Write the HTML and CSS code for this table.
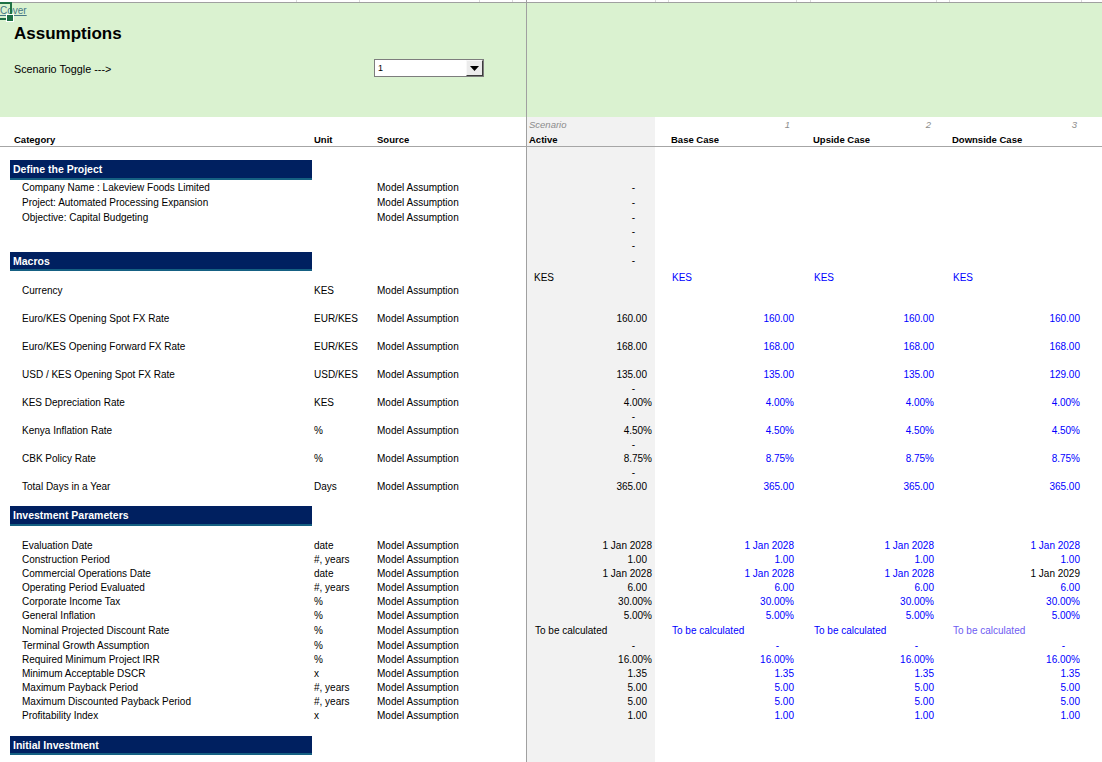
FILE: index.html
```html
<!DOCTYPE html>
<html lang="en">
<head>
<meta charset="utf-8">
<title>Assumptions</title>
<link rel="stylesheet" href="styles.css">
</head>
<body>
<div class="strip">
  <span class="w297"></span><span class="w63"></span><span class="w120"></span><span class="w33"></span><span class="w14 dark"></span><span class="w129"></span><span class="w13"></span><span class="w128"></span><span class="w14"></span><span class="w126"></span><span class="w13"></span><span class="w132"></span>
</div>
<div class="green">
  <a class="cover" href="#">Cover</a>
  <div class="sel"></div>
  <h1 class="title">Assumptions</h1>
  <div class="toggle">
    <span class="toggle-label">Scenario Toggle ---&gt;</span>
    <div class="dropdown">
      <span class="dd-val">1</span>
      <span class="dd-btn"><svg width="9" height="5" viewBox="0 0 9 5"><path d="M0 0H9L4.5 5Z" fill="#000"/></svg></span>
    </div>
  </div>
</div>
<div class="sheet">
  <div class="row h15 scen"><div class="act">Scenario</div><div class="base n6">1</div><div class="up n5">2</div><div class="down n4">3</div></div>
  <div class="row h15 head"><div class="cat">Category</div><div class="unit">Unit</div><div class="src">Source</div><div class="act">Active</div><div class="base">Base Case</div><div class="up">Upside Case</div><div class="down">Downside Case</div></div>
  <div class="row h13"></div>

  <div class="row h19 sec"><div class="bar">Define the Project</div></div>
  <div class="row h15"><div class="cat">Company Name : Lakeview Foods Limited</div><div class="src">Model Assumption</div><div class="act D">-</div></div>
  <div class="row h15"><div class="cat">Project: Automated Processing Expansion</div><div class="src">Model Assumption</div><div class="act D">-</div></div>
  <div class="row h15"><div class="cat">Objective: Capital Budgeting</div><div class="src">Model Assumption</div><div class="act D">-</div></div>
  <div class="row h14"><div class="act D">-</div></div>
  <div class="row h14"><div class="act D">-</div></div>

  <div class="row h18 sec"><div class="bar">Macros</div><div class="act D top">-</div></div>
  <div class="row h13"><div class="act L">KES</div><div class="base L b">KES</div><div class="up L b">KES</div><div class="down L b">KES</div></div>
  <div class="row h14"><div class="cat">Currency</div><div class="unit">KES</div><div class="src">Model Assumption</div></div>
  <div class="row h14"></div>
  <div class="row h14"><div class="cat">Euro/KES Opening Spot FX Rate</div><div class="unit">EUR/KES</div><div class="src">Model Assumption</div><div class="act N">160.00</div><div class="base N b">160.00</div><div class="up N b">160.00</div><div class="down N b">160.00</div></div>
  <div class="row h14"></div>
  <div class="row h14"><div class="cat">Euro/KES Opening Forward FX Rate</div><div class="unit">EUR/KES</div><div class="src">Model Assumption</div><div class="act N">168.00</div><div class="base N b">168.00</div><div class="up N b">168.00</div><div class="down N b">168.00</div></div>
  <div class="row h14"></div>
  <div class="row h14"><div class="cat">USD / KES Opening Spot FX Rate</div><div class="unit">USD/KES</div><div class="src">Model Assumption</div><div class="act N">135.00</div><div class="base N b">135.00</div><div class="up N b">135.00</div><div class="down N b">129.00</div></div>
  <div class="row h14"><div class="act D">-</div></div>
  <div class="row h14"><div class="cat">KES Depreciation Rate</div><div class="unit">KES</div><div class="src">Model Assumption</div><div class="act P">4.00%</div><div class="base P b">4.00%</div><div class="up P b">4.00%</div><div class="down P b">4.00%</div></div>
  <div class="row h14"><div class="act D">-</div></div>
  <div class="row h14"><div class="cat">Kenya Inflation Rate</div><div class="unit">%</div><div class="src">Model Assumption</div><div class="act P">4.50%</div><div class="base P b">4.50%</div><div class="up P b">4.50%</div><div class="down P b">4.50%</div></div>
  <div class="row h14"><div class="act D">-</div></div>
  <div class="row h14"><div class="cat">CBK Policy Rate</div><div class="unit">%</div><div class="src">Model Assumption</div><div class="act P">8.75%</div><div class="base P b">8.75%</div><div class="up P b">8.75%</div><div class="down P b">8.75%</div></div>
  <div class="row h14"><div class="act D">-</div></div>
  <div class="row h14"><div class="cat">Total Days in a Year</div><div class="unit">Days</div><div class="src">Model Assumption</div><div class="act N">365.00</div><div class="base N b">365.00</div><div class="up N b">365.00</div><div class="down N b">365.00</div></div>
  <div class="row h13"></div>

  <div class="row h19 sec"><div class="bar">Investment Parameters</div></div>
  <div class="row h13"></div>
  <div class="row h14"><div class="cat">Evaluation Date</div><div class="unit">date</div><div class="src">Model Assumption</div><div class="act P">1 Jan 2028</div><div class="base N b">1 Jan 2028</div><div class="up N b">1 Jan 2028</div><div class="down N b">1 Jan 2028</div></div>
  <div class="row h14"><div class="cat">Construction Period</div><div class="unit">#, years</div><div class="src">Model Assumption</div><div class="act N">1.00</div><div class="base N b">1.00</div><div class="up N b">1.00</div><div class="down N b">1.00</div></div>
  <div class="row h14"><div class="cat">Commercial Operations Date</div><div class="unit">date</div><div class="src">Model Assumption</div><div class="act P">1 Jan 2028</div><div class="base N b">1 Jan 2028</div><div class="up N b">1 Jan 2028</div><div class="down N">1 Jan 2029</div></div>
  <div class="row h14"><div class="cat">Operating Period Evaluated</div><div class="unit">#, years</div><div class="src">Model Assumption</div><div class="act N">6.00</div><div class="base N b">6.00</div><div class="up N b">6.00</div><div class="down N b">6.00</div></div>
  <div class="row h14"><div class="cat">Corporate Income Tax</div><div class="unit">%</div><div class="src">Model Assumption</div><div class="act P">30.00%</div><div class="base P b">30.00%</div><div class="up P b">30.00%</div><div class="down P b">30.00%</div></div>
  <div class="row h14"><div class="cat">General Inflation</div><div class="unit">%</div><div class="src">Model Assumption</div><div class="act P">5.00%</div><div class="base P b">5.00%</div><div class="up P b">5.00%</div><div class="down P b">5.00%</div></div>
  <div class="row h15"><div class="cat">Nominal Projected Discount Rate</div><div class="unit">%</div><div class="src">Model Assumption</div><div class="act L tbc">To be calculated</div><div class="base L b">To be calculated</div><div class="up L b">To be calculated</div><div class="down L v">To be calculated</div></div>
  <div class="row h15"><div class="cat">Terminal Growth Assumption</div><div class="unit">%</div><div class="src">Model Assumption</div><div class="act D">-</div><div class="base D b">-</div><div class="up D b">-</div><div class="down D b">-</div></div>
  <div class="row h14"><div class="cat">Required Minimum Project IRR</div><div class="unit">%</div><div class="src">Model Assumption</div><div class="act P">16.00%</div><div class="base P b">16.00%</div><div class="up P b">16.00%</div><div class="down P b">16.00%</div></div>
  <div class="row h14"><div class="cat">Minimum Acceptable DSCR</div><div class="unit">x</div><div class="src">Model Assumption</div><div class="act N">1.35</div><div class="base N b">1.35</div><div class="up N b">1.35</div><div class="down N b">1.35</div></div>
  <div class="row h14"><div class="cat">Maximum Payback Period</div><div class="unit">#, years</div><div class="src">Model Assumption</div><div class="act N">5.00</div><div class="base N b">5.00</div><div class="up N b">5.00</div><div class="down N b">5.00</div></div>
  <div class="row h14"><div class="cat">Maximum Discounted Payback Period</div><div class="unit">#, years</div><div class="src">Model Assumption</div><div class="act N">5.00</div><div class="base N b">5.00</div><div class="up N b">5.00</div><div class="down N b">5.00</div></div>
  <div class="row h14"><div class="cat">Profitability Index</div><div class="unit">x</div><div class="src">Model Assumption</div><div class="act N">1.00</div><div class="base N b">1.00</div><div class="up N b">1.00</div><div class="down N b">1.00</div></div>
  <div class="row h14"></div>

  <div class="row h18 sec"><div class="bar">Initial Investment</div></div>
</div>
</body>
</html>
```

FILE: styles.css
```css
* {
  box-sizing: border-box;
  margin: 0;
  padding: 0;
}

body {
  width: 1102px;
  height: 762px;
  overflow: hidden;
  background: #fff;
  color: #000;
  font-family: "Liberation Sans", Arial, sans-serif;
  font-size: 10px;
}

/* top gridline strip (row above the frozen area) */
.strip {
  display: flex;
  height: 3px;
  border-bottom: 1px solid #a0a0a0;
}
.strip span {
  height: 2px;
  border-right: 1px solid #d9d9d9;
  flex: none;
}
.strip .dark { border-right-color: #a0a0a0; }
.w297 { width: 297px; }
.w63 { width: 63px; }
.w120 { width: 120px; }
.w33 { width: 33px; }
.w14 { width: 14px; }
.w129 { width: 129px; }
.w13 { width: 13px; }
.w128 { width: 128px; }
.w126 { width: 126px; }
.w132 { width: 132px; }

/* green title band */
.green {
  position: relative;
  height: 114px;
  background: linear-gradient(90deg, #daf2d0 0 526px, #a0a0a0 526px 527px, #daf2d0 527px);
}

.cover {
  display: block;
  width: 40px;
  height: 15px;
  line-height: 15px;
  font-size: 10px;
  color: #467886;
  text-decoration: underline;
}

.sel {
  position: absolute;
  left: 0;
  top: -1px;
  width: 12px;
  height: 18px;
  border: 2px solid #1e7145;
  border-left: 0;
}
.sel::after {
  content: "";
  position: absolute;
  right: -4px;
  bottom: -4px;
  width: 6px;
  height: 6px;
  background: #1e7145;
  border: 1px solid #fff;
}

.title {
  margin: 6px 0 0 14px;
  height: 20px;
  line-height: 20px;
  font-size: 17px;
  font-weight: bold;
}

.toggle {
  display: flex;
  align-items: center;
  height: 18px;
  margin-top: 15px;
  padding-left: 14px;
}
.toggle-label {
  width: 360px;
  padding-top: 1px;
  font-size: 10.8px;
}
.dropdown {
  display: flex;
  align-items: center;
  justify-content: space-between;
  width: 110px;
  height: 18px;
  background: #fff;
  border: 1px solid #7d7d7d;
}
.dd-val {
  padding-left: 3px;
  font-size: 9px;
}
.dd-btn {
  display: flex;
  align-items: center;
  justify-content: center;
  width: 17px;
  height: 16px;
  background: #ececec;
  border: 1px solid;
  border-color: #f8f8f8 #3c3c3c #3c3c3c #f8f8f8;
}

/* sheet body */
.sheet {
  height: 645px;
  background: linear-gradient(90deg, #fff 0 526px, #a0a0a0 526px 527px, #f2f2f2 527px 655px, #fff 655px);
}

.row {
  display: grid;
  grid-template-columns: 10px 302px 63px 152px 128px 13px 128px 14px 126px 13px 132px 21px;
  align-items: start;
  white-space: nowrap;
}
.row > div { padding-top: 1px; }
.h13 { height: 13px; line-height: 13px; }
.h14 { height: 14px; line-height: 14px; }
.h15 { height: 15px; line-height: 15px; }
.h18 { height: 18px; line-height: 16px; }
.h19 { height: 19px; line-height: 17px; }

.cat { grid-column: 2; padding-left: 12px; }
.unit { grid-column: 3; padding-left: 2px; }
.src { grid-column: 4; padding-left: 2px; }
.act { grid-column: 5; }
.base { grid-column: 7; }
.up { grid-column: 9; }
.down { grid-column: 11; }

/* number formats */
.N, .P, .D { text-align: right; }
.act.N { padding-right: 8px; }
.act.P { padding-right: 3px; }
.base.N, .base.P { padding-right: 2px; }
.up.N, .up.P { padding-right: 2px; }
.down.N, .down.P { padding-right: 1px; }
.act.D { padding-right: 20px; }
.base.D { padding-right: 17px; }
.up.D { padding-right: 18px; }
.down.D { padding-right: 16px; }
.act.L { padding-left: 7px; }
.act.tbc { padding-left: 8px; }
.base.L, .up.L, .down.L { padding-left: 4px; }

.b { color: #0000ff; }
.v { color: #6e5cf2; }

/* scenario numbering row */
.scen {
  font-size: 9.5px;
  font-style: italic;
  color: #8c8c8c;
}
.scen > div { padding-top: 0; }
.scen .act { padding-left: 2px; }
.n6, .n5, .n4 { text-align: right; }
.n6 { padding-right: 6px; }
.n5 { padding-right: 5px; }
.n4 { padding-right: 4px; }

/* column headers */
.head {
  line-height: 14px;
  font-size: 9.5px;
  font-weight: bold;
  border-bottom: 1px solid #a6a6a6;
}
.head .cat { padding-left: 4px; }
.head .act { padding-left: 2px; }
.head .base, .head .up, .head .down { padding-left: 3px; }

/* section bars */
.sec { align-items: stretch; }
.bar {
  grid-column: 2;
  display: flex;
  align-items: center;
  padding-left: 3px;
  background: #002060;
  border-bottom: 2px solid #156082;
  color: #fff;
  font-size: 10.5px;
  font-weight: bold;
}
.sec .act.top {
  align-self: start;
  height: 16px;
  line-height: 16px;
}
```
